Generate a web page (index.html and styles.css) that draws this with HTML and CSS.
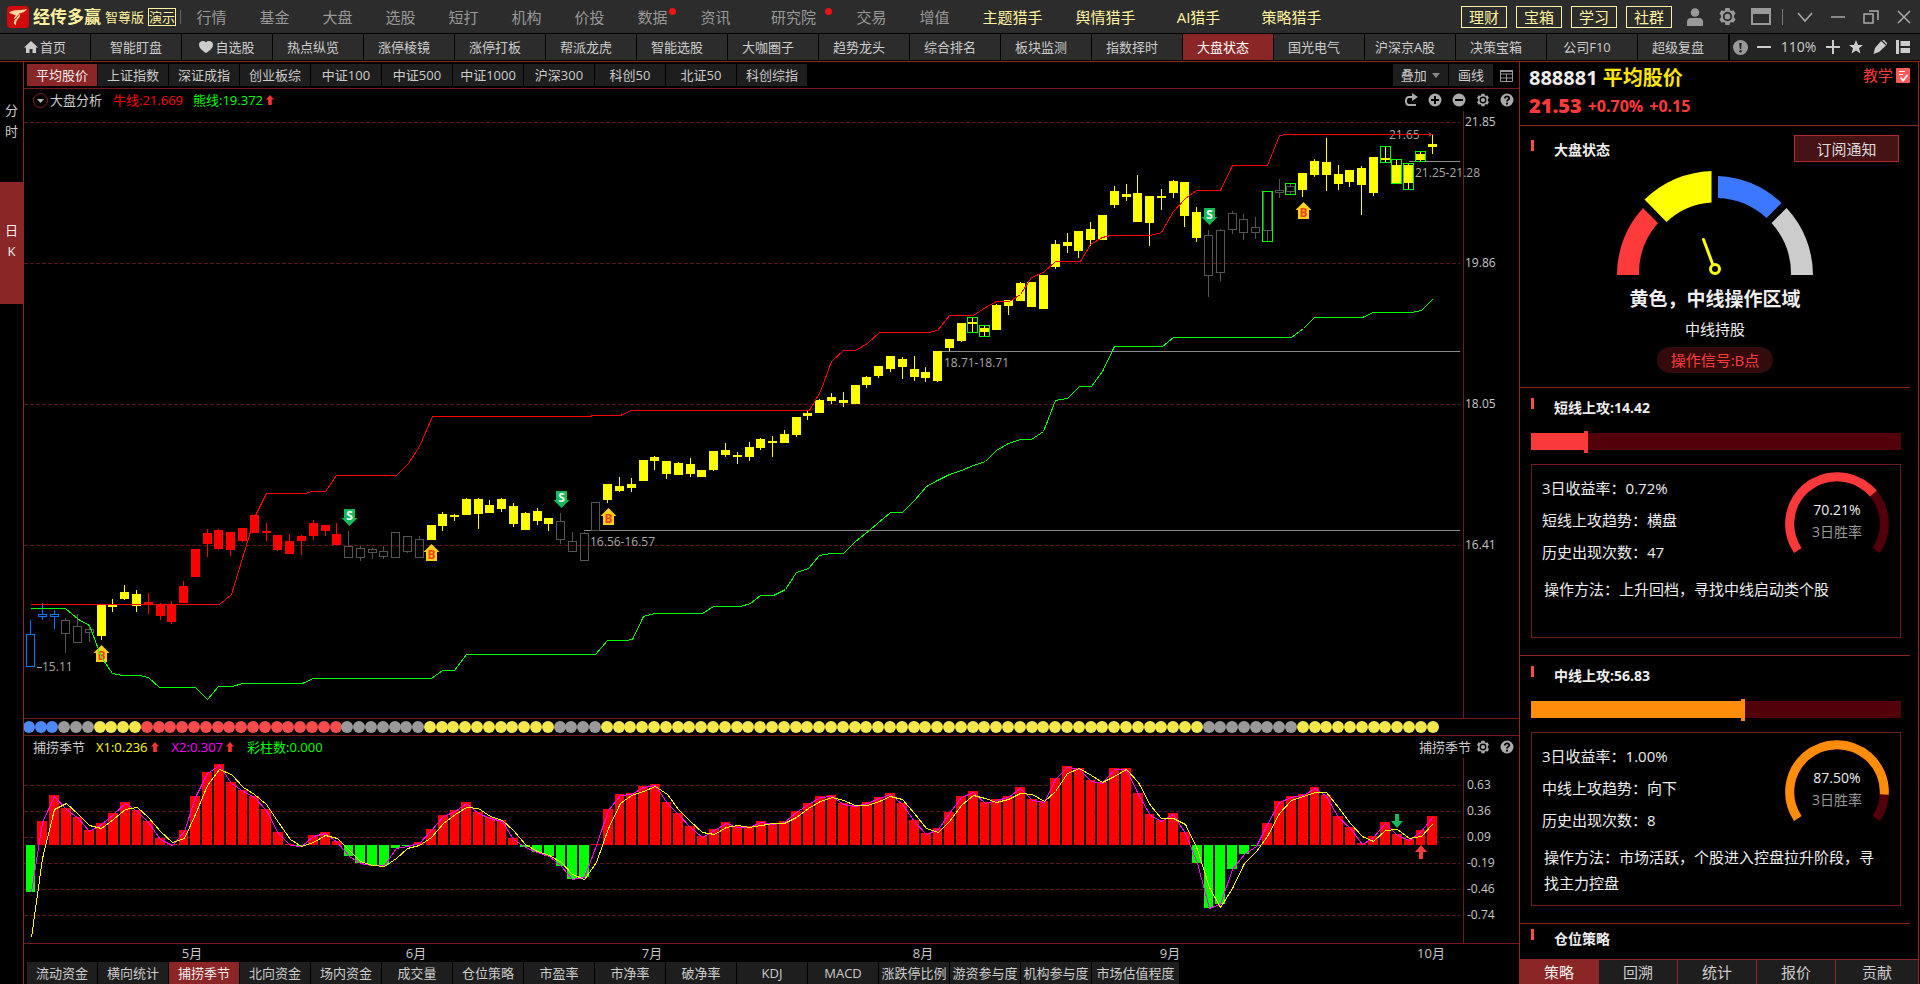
FILE: index.html
```html
<!DOCTYPE html>
<html lang="zh-CN">
<head>
<meta charset="utf-8">
<title>经传多赢 智尊版</title>
<link rel="stylesheet" href="styles.css">
</head>
<body>
<svg class="defs" width="0" height="0" aria-hidden="true">
  <symbol id="i-gear" viewBox="0 0 18 18"><path fill="currentColor" fill-rule="evenodd" d="M6.600 3 7 1h4l.4 2 1.300.7 2-.7 2 3.400-1.500 1.400v2.400l1.500 1.400-2 3.400-2-.7-1.300.7L11 17H7l-.4-2-1.300-.7-2 .7-2-3.400 1.500-1.400V7.800L1.300 6.400l2-3.400 2 .7zM9 4.600a4.400 4.400 0 1 0 0 8.800 4.400 4.400 0 0 0 0-8.800zM9 6.300a2.700 2.700 0 1 1 0 5.400 2.700 2.700 0 0 1 0-5.400z"/></symbol>
  <symbol id="i-help" viewBox="0 0 14 14"><circle cx="7" cy="7" r="6.500" fill="currentColor"/><path d="M4.800 5.500C4.800 2.600 9.400 2.800 9.200 5.400 9.100 6.900 7 6.800 7 8.600" fill="none" stroke="#000" stroke-width="1.800"/><circle cx="7" cy="10.700" r="1.100" fill="#000"/></symbol>
  <symbol id="i-up" viewBox="0 0 8 10"><path d="M4 0 8 4.500H5.800V10H2.200V4.500H0z" fill="#ff3232"/></symbol>
</svg>
<div class="app">
  <header class="top">
    <svg class="logo" viewBox="0 0 22 22" width="22" height="22"><rect width="22" height="22" rx="4" fill="#d20a0a"/><path d="M2 7C5 3 12 5 20 3c-2 3-5 4-8 4.500 2 1.500 1 3.500-1 5.500-2 2-2 4-2 6.500-3-2-2.500-4-.5-6.500-2 0-1.500-2 .5-3.500C7 9 5 7.500 2 7z" fill="#ffd9a0"/><path d="M8.500 13c1-2 2.500-3 3.500-4.500" fill="none" stroke="#d20a0a"/></svg>
    <strong class="brand">经传多赢</strong>
    <span class="edition">智尊版</span>
    <span class="demo">演示</span>
    <nav class="menu">
      <a href="#">行情</a><a href="#">基金</a><a href="#">大盘</a><a href="#">选股</a><a href="#">短打</a><a href="#">机构</a><a href="#">价投</a><a href="#" class="new">数据</a><a href="#">资讯</a><a href="#" class="wide new">研究院</a><a href="#">交易</a><a href="#">增值</a><a href="#" class="wide hot">主题猎手</a><a href="#" class="wide hot">舆情猎手</a><a href="#" class="wide hot">AI猎手</a><a href="#" class="wide hot">策略猎手</a>
    </nav>
    <div class="quick"><a href="#">理财</a><a href="#">宝箱</a><a href="#">学习</a><a href="#">社群</a></div>
    <div class="win">
      <button aria-label="用户"><svg viewBox="0 0 18 18" width="18" height="18"><circle cx="9" cy="4.500" r="4.300" fill="currentColor"/><path d="M1 18v-4q0-4 4-4h8q4 0 4 4v4z" fill="currentColor"/></svg></button>
      <button aria-label="设置"><svg width="19" height="19"><use href="#i-gear"/></svg></button>
      <button aria-label="窗口"><svg viewBox="0 0 20 17" width="20" height="17"><path d="M0 0h20v17H0zM2 6v9h16V6z" fill="currentColor" fill-rule="evenodd"/></svg></button>
    </div>
    <div class="win caps">
      <button aria-label="更多"><svg viewBox="0 0 16 16" width="16" height="16"><path d="m1 4 7 8 7-8" class="ln"/></svg></button>
      <button aria-label="最小化"><svg viewBox="0 0 16 16" width="16" height="16"><path d="M1 8h14" class="ln"/></svg></button>
      <button aria-label="还原"><svg viewBox="0 0 16 16" width="16" height="16"><path d="M1 5h9v9H1zM6 2h9v9" class="ln"/></svg></button>
      <button aria-label="关闭"><svg viewBox="0 0 16 16" width="16" height="16"><path d="m2 2 12 12M14 2 2 14" class="ln"/></svg></button>
    </div>
  </header>

  <div class="subbar">
    <nav class="sub">
      <a href="#" class="mid"><svg viewBox="0 0 14 12" width="14" height="12"><path d="M7 0 14 6.500H12V12H8.500V8h-3v4H2V6.500H0z" fill="currentColor"/></svg>首页</a>
      <a href="#" class="mid">智能盯盘</a>
      <a href="#" class="mid"><svg viewBox="0 0 14 12" width="14" height="12"><path d="M7 12C2 9 0 6.500 0 3.500 0 .5 4.500-1.500 7 1.500 9.500-1.500 14 .5 14 3.500 14 6.500 12 9 7 12z" fill="currentColor"/></svg>自选股</a>
      <a href="#">热点纵览</a><a href="#">涨停棱镜</a><a href="#">涨停打板</a><a href="#">帮派龙虎</a><a href="#">智能选股</a><a href="#">大咖圈子</a><a href="#">趋势龙头</a><a href="#">综合排名</a><a href="#">板块监测</a><a href="#">指数择时</a><a href="#" class="on">大盘状态</a><a href="#">国光电气</a><a href="#">沪深京A股</a><a href="#">决策宝箱</a><a href="#">公司F10</a><a href="#">超级复盘</a>
    </nav>
    <div class="zoombar">
      <button aria-label="提示"><svg viewBox="0 0 15 15" width="15" height="15"><circle cx="7.500" cy="7.500" r="7.500" fill="#999"/><path d="M6.300 3h2.400l-.5 6H6.800z" fill="#222"/><circle cx="7.500" cy="11.300" r="1.200" fill="#222"/></svg></button>
      <button aria-label="缩小"><svg viewBox="0 0 14 14" width="14" height="14"><path d="M0 7h14" stroke="currentColor" stroke-width="2"/></svg></button>
      <span>110%</span>
      <button aria-label="放大"><svg viewBox="0 0 14 14" width="14" height="14"><path d="M0 7h14M7 0v14" stroke="currentColor" stroke-width="2"/></svg></button>
      <button aria-label="收藏"><svg viewBox="0 0 14 14" width="14" height="14"><path d="m7 0 2 5h5l-4 3.300 1.500 5.200L7 10.400l-4.500 3.100L4 8.300 0 5h5z" fill="currentColor"/></svg></button>
      <button aria-label="画笔"><svg viewBox="0 0 14 14" width="14" height="14"><path d="m8 1 5 4.500L6 12l-5.500 2L2 8zM9 0h2l3 3v2z" fill="currentColor"/></svg></button>
      <button aria-label="布局"><svg viewBox="0 0 14 14" width="14" height="14"><path d="M0 0h3v14H0zM4.500 1H14v5H4.500zM4.500 8H14v5H4.500z" fill="currentColor"/></svg></button>
    </div>
  </div>

  <div class="body">
    <aside class="side">
      <button>分<br>时</button>
      <button class="on">日<br>K</button>
    </aside>

    <main class="main">
      <div class="tabs head">
        <button class="on">平均股价</button><button>上证指数</button><button>深证成指</button><button>创业板综</button><button>中证100</button><button>中证500</button><button>中证1000</button><button>沪深300</button><button>科创50</button><button>北证50</button><button>科创综指</button>
        <span class="grow"></span>
        <button class="over">叠加 <i class="caret"></i></button><button class="draw">画线</button>
        <button class="cells" aria-label="表格"><svg viewBox="0 0 13 13" width="13" height="13"><path d="M.5 1.500h12v11H.5zM.5 5h12M.5 9h12M6.500 5v7.500" fill="none" stroke="#999"/><path d="M0 1h13v2H0z" fill="#999"/></svg></button>
      </div>
      <div class="legend">
        <button class="drop" aria-label="指标菜单"><svg viewBox="0 0 15 15" width="15" height="15"><circle cx="7.500" cy="7.500" r="7" fill="none" stroke="#8c2020"/><path d="M4 6h7L7.500 10z" fill="#bbb"/></svg></button>
        <span class="name">大盘分析</span>
        <span class="bull">牛线:21.669</span>
        <span class="bear">熊线:19.372<svg width="8" height="10"><use href="#i-up"/></svg></span>
        <span class="grow"></span>
        <div class="tools">
          <button aria-label="重做"><svg viewBox="0 0 14 14" width="14" height="14"><path d="M9 4H5Q2 4 2 8t3 4h7" fill="none" stroke="currentColor" stroke-width="2"/><path d="m8 0 6 4-6 4z" fill="currentColor"/></svg></button>
          <button aria-label="放大"><svg viewBox="0 0 14 14" width="14" height="14"><circle cx="7" cy="7" r="6.500" fill="currentColor"/><path d="M3 7h8M7 3v8" stroke="#000" stroke-width="2"/></svg></button>
          <button aria-label="缩小"><svg viewBox="0 0 14 14" width="14" height="14"><circle cx="7" cy="7" r="6.500" fill="currentColor"/><path d="M3 7h8" stroke="#000" stroke-width="2"/></svg></button>
          <button aria-label="设置"><svg width="14" height="14"><use href="#i-gear"/></svg></button>
          <button aria-label="帮助"><svg width="14" height="14"><use href="#i-help"/></svg></button>
        </div>
      </div>
      <svg class="price" id="price" role="img" aria-label="K线图"></svg>
      <svg class="strip" id="strip" role="img" aria-label="状态"></svg>
      <div class="legend second">
        <span class="name">捕捞季节</span>
        <span class="x1">X1:0.236<svg width="8" height="10"><use href="#i-up"/></svg></span>
        <span class="x2">X2:0.307<svg width="8" height="10"><use href="#i-up"/></svg></span>
        <span class="bear">彩柱数:0.000</span>
        <span class="grow"></span>
        <span class="name">捕捞季节</span>
        <div class="tools">
          <button aria-label="设置"><svg width="14" height="14"><use href="#i-gear"/></svg></button>
          <button aria-label="帮助"><svg width="14" height="14"><use href="#i-help"/></svg></button>
        </div>
      </div>
      <svg class="season" id="season" role="img" aria-label="捕捞季节"></svg>
      <div class="tabs foot">
        <button>流动资金</button><button>横向统计</button><button class="on">捕捞季节</button><button>北向资金</button><button>场内资金</button><button>成交量</button><button>仓位策略</button><button>市盈率</button><button>市净率</button><button>破净率</button><button>KDJ</button><button>MACD</button><button>涨跌停比例</button><button>游资参与度</button><button>机构参与度</button><button class="long">市场估值程度</button>
      </div>
    </main>

    <aside class="panel">
      <div class="quote">
        <h1>888881 <em>平均股价</em></h1>
        <a href="#" class="teach">教学<svg viewBox="0 0 14 15" width="14" height="15"><rect width="14" height="15" rx="1" fill="#ff5a5a"/><path d="M3 3.500h6M3 6.500h4" stroke="#fff"/><path d="m4.500 9.500 2.500 3L11.500 7" fill="none" stroke="#fff" stroke-width="1.800"/></svg></a>
        <p class="last"><b>21.53</b><span>+0.70%</span><span>+0.15</span></p>
      </div>
      <div class="scroll">
        <section class="state">
          <h2>大盘状态</h2>
          <button class="notify">订阅通知</button>
          <svg class="gauge" viewBox="0 0 200 106" width="200" height="106">
            <path d="M2 105A98 98 0 0 1 28 38L43 53A76 76 0 0 0 24 105z" fill="#ff3a3a"/>
            <path d="M29.500 29.500A103 103 0 0 1 96.500 1V32.500A72 72 0 0 0 51.500 52z" fill="#ffff00"/>
            <path d="M103 6A98 98 0 0 1 166.500 33L151.500 48A76 76 0 0 0 103 28z" fill="#3c78ff"/>
            <path d="M171.500 38A98 98 0 0 1 198 105H176A76 76 0 0 0 156.500 53z" fill="#ccc"/>
            <path d="M88.500 69.500 98 95" stroke="#ffff00" stroke-width="3" stroke-linecap="round"/>
            <circle cx="100" cy="99" r="4.500" fill="#000" stroke="#ffff00" stroke-width="3"/>
          </svg>
          <p class="zone">黄色，中线操作区域</p>
          <p class="advice">中线持股</p>
          <span class="pill">操作信号:B点</span>
        </section>
        <section class="attack">
          <h2>短线上攻:14.42</h2>
          <div class="meter"><i style="width:15.400%"></i></div>
          <div class="card">
            <div class="facts">
              <ul><li>3日收益率：0.72%</li><li>短线上攻趋势：横盘</li><li>历史出现次数：47</li></ul>
              <svg class="ring" viewBox="0 0 104 84" width="104" height="84"><path class="track" d="M12.800 78.400A47.300 47.300 0 1 1 91.200 78.400"/><path class="val" pathLength="100" stroke-dasharray="70.200 100" d="M12.800 78.400A47.300 47.300 0 1 1 91.200 78.400"/><text x="52" y="43">70.21%</text><text x="52" y="65" class="dim">3日胜率</text></svg>
            </div>
            <p>操作方法：上升回档，寻找中线启动类个股</p>
          </div>
        </section>
        <section class="attack orange">
          <h2>中线上攻:56.83</h2>
          <div class="meter"><i style="width:57.800%"></i></div>
          <div class="card">
            <div class="facts">
              <ul><li>3日收益率：1.00%</li><li>中线上攻趋势：向下</li><li>历史出现次数：8</li></ul>
              <svg class="ring" viewBox="0 0 104 84" width="104" height="84"><path class="track" d="M12.800 78.400A47.300 47.300 0 1 1 91.200 78.400"/><path class="val" pathLength="100" stroke-dasharray="87.500 100" d="M12.800 78.400A47.300 47.300 0 1 1 91.200 78.400"/><text x="52" y="43">87.50%</text><text x="52" y="65" class="dim">3日胜率</text></svg>
            </div>
            <p>操作方法：市场活跃，个股进入控盘拉升阶段，寻找主力控盘</p>
          </div>
        </section>
        <section class="position"><h2>仓位策略</h2></section>
      </div>
      <nav class="ptabs"><button class="on">策略</button><button>回溯</button><button>统计</button><button>报价</button><button>贡献</button></nav>
    </aside>
  </div>
</div>
<script src="charts.js"></script>
</body>
</html>
```

FILE: styles.css
```css
* { box-sizing: border-box; }
body { margin: 0; background: #000; color: #ccc; font: 13px/20px "Open Sans", "Noto Sans CJK SC", sans-serif; }
button { margin: 0; padding: 0; border: 0; background: none; color: inherit; font: inherit; cursor: pointer; white-space: nowrap; }
a { color: inherit; text-decoration: none; white-space: nowrap; }
h1, h2, p, ul { margin: 0; padding: 0; list-style: none; }
svg { flex: none; }
.defs { position: absolute; }
.grow { flex: 1; }
.app { display: flex; flex-direction: column; height: 100vh; overflow: hidden; }

.top { display: flex; align-items: center; flex: none; height: 33px; padding-left: 7px; background: #2c2c2c; color: #999; }
.brand { margin-left: 4px; color: #fff3a0; font-size: 17px; white-space: nowrap; }
.edition { margin-left: 4px; color: #fff3a0; white-space: nowrap; }
.demo { margin-left: 4px; border: 1px solid #fff3a0; color: #fff3a0; line-height: 16px; white-space: nowrap; }
.menu { display: flex; flex: 1; align-items: center; margin-left: 4px; font-size: 15px; position: relative; }
.menu::before { content: ""; position: absolute; left: 0; width: 1px; height: 14px; background: #666; }
.menu a { position: relative; width: 63px; text-align: center; }
.menu .wide { width: 93px; }
.menu .hot { color: #fff3a0; }
.menu .new::after { content: ""; position: absolute; top: 1px; right: 8px; width: 7px; height: 7px; border-radius: 50%; background: #f01414; }
.quick { display: flex; gap: 9px; margin-right: 6px; color: #fff3a0; font-size: 15px; }
.quick a { width: 46px; border: 1px solid #fff3a0; text-align: center; }
.win { display: flex; }
.win button { display: flex; justify-content: center; align-items: center; width: 33px; height: 24px; }
.caps { position: relative; margin-left: 11px; }
.caps::before { content: ""; position: absolute; left: -6px; top: 4px; width: 1px; height: 16px; background: #777; }
.ln { fill: none; stroke: #aaa; stroke-width: 1.500; }

.subbar { display: flex; flex: none; height: 29px; padding: 1px 0; border-bottom: 1px solid #8a2626; }
.sub { display: grid; grid-template-columns: repeat(19, minmax(0, 1fr)); flex: 1; gap: 1px; }
.sub a { display: flex; justify-content: center; align-items: center; gap: 2px; padding-right: 10px; background: #2c2c2c; }
.sub .mid { padding-right: 0; }
.sub .on { background: #8a2626; color: #fff; }
.zoombar { display: flex; align-items: center; justify-content: space-between; flex: none; width: 190px; margin-left: 2px; padding: 0 10px 0 3px; background: #242424; font-size: 14px; }
.zoombar button { display: flex; }

.body { display: flex; flex: 1; min-height: 0; }
.side { flex: none; width: 24px; border-right: 1px solid #8a2626; padding-top: 38px; }
.side button { display: block; width: 23px; height: 82px; line-height: 21px; padding-bottom: 42px; }
.side .on { height: 122px; padding: 0 0 4px; background: #8a2626; color: #eee; }
.main { display: flex; flex-direction: column; flex: 1; min-width: 0; }

.tabs { display: flex; flex: none; gap: 1px; padding-left: 3px; }
.tabs button { width: 70px; height: 22px; background: #1e1e1e; line-height: 22px; }
.tabs .on { background: #8a2626; color: #eee; }
.tabs .long { width: 87px; }
.tabs .over { width: 55px; }
.tabs .draw { width: 44px; }
.tabs .cells { display: flex; justify-content: center; align-items: center; width: 24px; background: none; }
.head { height: 27px; padding: 2px 1px 2px 3px; border-bottom: 1px solid #701c1c; }
.caret { display: inline-block; margin-left: 2px; border: 4px solid transparent; border-top: 5px solid #888; border-bottom: 0; vertical-align: 2px; }

.legend { display: flex; align-items: center; flex: none; height: 22px; padding: 0 0 0 9px; white-space: nowrap; }
.drop { display: flex; }
.name { margin-left: 2px; }
.bull { margin-left: 11px; color: #f00; }
.bear { margin-left: 10px; color: #0f0; }
.legend span svg { margin-left: 3px; }
.second .x1 { margin-left: 11px; color: #ff0; }
.second .x2 { margin-left: 13px; color: #f0f; }
.second .bear { margin-left: 13px; }
.second { padding-left: 7px; }
.tools { display: flex; color: #aaa; }
.tools button { display: flex; justify-content: center; align-items: center; width: 24px; }

.price, .strip, .season { display: block; width: 100%; min-height: 0; overflow: hidden; }
.price { flex: 607 1 0; }
.season { flex: 204 1 0; }
.strip { flex: none; height: 18px; border: solid #701c1c; border-width: 1px 0; }
.price text, .season text { fill: #c8c8c8; font-size: 12px; }
.price .note { fill: #a8a8a8; }
.price .mark { font-size: 12px; font-weight: 700; text-anchor: middle; }
.price .buy { fill: #ff3c1e; }
.price .sell { fill: #fff; }
.season .month { font-size: 13px; text-anchor: middle; }

.panel { display: flex; flex-direction: column; flex: none; width: 400px; margin-right: 1px; border: solid #8a2626; border-width: 0 1px; color: #eee; }
.quote { display: grid; grid-template-columns: 1fr auto; align-content: start; flex: none; height: 64px; padding: 0 8px 0 9px; border-bottom: 1px solid #8a2626; }
.quote h1 { font-size: 20px; line-height: 32px; }
.quote em { color: #ffe600; font-style: normal; }
.teach { display: flex; align-items: center; gap: 3px; height: 26px; color: #ff3a3a; font-size: 15px; }
.last { display: flex; align-items: center; gap: 6px; color: #ff3a3a; font-size: 16px; line-height: 24px; font-weight: 700; }
.last b { font-size: 20px; }
.scroll { flex: 1; min-height: 0; overflow: hidden; }
.scroll section { position: relative; margin-right: 8px; padding: 10px 9px 17px 11px; border-bottom: 1px solid #8a2626; }
.scroll h2 { display: flex; gap: 20px; font-size: 14px; line-height: 20px; }
.scroll h2::before { content: ""; width: 3px; height: 11px; background: #ff4a4a; }
.scroll .state { display: flex; flex-direction: column; align-items: center; padding: 14px 0; }
.state h2 { align-self: flex-start; margin-left: 11px; }
.notify { position: absolute; top: 9px; right: 11px; width: 105px; height: 27px; border: 1px solid #b02a2e; background: #461214; color: #ddd; font-size: 15px; }
.gauge { margin-top: 10px; }
.zone { margin-top: 8px; font-size: 19px; line-height: 30px; font-weight: 700; }
.advice { font-size: 15px; line-height: 30px; }
.pill { margin-top: 3px; height: 26px; padding: 0 14px; border-radius: 13px; background: #330b0c; color: #ff3a3a; font-size: 15px; line-height: 26px; }
.scroll .position { padding-top: 5px; border: 0; }
.meter { height: 17px; margin-top: 15px; background: #520009; }
.meter i { display: block; position: relative; height: 17px; background: #fa3a3a; }
.meter i::after { content: ""; position: absolute; right: 0; top: -2px; width: 4px; height: 22px; background: inherit; }
.card { min-height: 174px; margin-top: 14px; padding: 7px 11px 7px 10px; border: 1px solid #701c1c; font-size: 15px; }
.facts { display: flex; justify-content: space-between; }
.facts li { line-height: 32px; }
.card p { margin-top: 8px; padding: 0 10px 0 2px; line-height: 26px; }
.ring path { fill: none; stroke-width: 9px; }
.ring .track { stroke: #520009; }
.ring .val { stroke: #fa3a3a; }
.ring text { fill: #eee; font-size: 14px; text-anchor: middle; }
.ring .dim { fill: #999; }
.orange .meter i { background: #ff8c0a; }
.orange .ring .val { stroke: #ff8c0a; }
.ptabs { display: flex; flex: none; border-top: 1px solid #8a2626; }
.ptabs button { flex: 79 1 0; height: 24px; border-left: 1px solid #8a2626; background: #1e1e1e; color: #ccc; font-size: 15px; }
.ptabs button:first-child { border-left: 0; }
.ptabs button:last-child { flex-grow: 83; }
.ptabs .on { background: #8a2626; color: #eee; }
```

FILE: charts.js
```js
// Plot space: 1495 units wide; the price pane starts at 111, the season pane at 758.
const W = 1495, X0 = 24, N = 120;
const cx = i => 30.5 + 11.78 * i;

// high, body top, body bottom, low
const candles = [
[620,634,667,667],[603,614,617,620],[610,614,617,629],[618,620,634,653],[614,626,643,643],[625,629,633,642],
[605,605,636,640],[599,605,607,612],[585,592,599,600],[590,594,606,612],[593,602,605,614],[603,605,616,620],
[601,605,622,624],[581,586,603,603],[549,549,577,577],[529,533,544,557],[529,530,549,550],[532,532,550,556],
[528,528,541,542],[515,515,533,533],[523,531,533,541],[535,535,550,551],[534,541,554,554],[535,536,541,555],
[520,523,536,540],[525,525,531,536],[523,534,545,545],[531,546,558,558],[546,548,558,561],[548,549,553,559],
[546,551,557,559],[532,532,558,558],[536,536,552,553],[536,539,558,558],[525,525,540,540],[512,514,526,531],
[514,515,517,521],[498,499,515,515],[498,499,514,529],[500,505,513,513],[498,499,509,512],[503,506,524,527],
[512,513,530,530],[508,511,521,525],[518,518,524,531],[513,521,540,544],[532,541,552,552],[532,533,561,561],
[502,502,531,531],[484,484,500,503],[477,486,491,492],[478,484,488,492],[460,460,481,481],[456,457,461,470],
[461,461,474,479],[462,463,475,475],[458,464,474,477],[470,470,477,477],[451,451,470,471],[443,450,455,457],
[452,455,457,464],[442,447,457,461],[438,439,448,450],[436,441,443,457],[430,434,443,443],[417,417,435,437],
[411,413,416,420],[399,400,413,413],[393,397,401,404],[392,400,403,407],[385,385,404,404],[376,377,385,388],
[366,366,376,378],[356,356,369,372],[357,359,367,379],[356,369,377,381],[367,372,378,382],[351,351,381,382],
[339,339,348,351],[323,323,341,342],[317,322,324,332],[326,328,332,337],[304,305,330,330],[300,300,306,315],
[282,283,301,301],[282,282,307,307],[275,275,309,309],[240,244,267,269],[233,242,246,253],[231,231,251,258],
[222,229,240,246],[215,215,240,240],[186,191,205,208],[184,194,197,201],[175,193,222,222],[196,196,223,246],
[189,196,198,210],[180,181,193,198],[182,182,216,227],[207,212,238,242],[230,235,276,297],[229,230,273,281],
[211,213,230,234],[214,219,233,240],[217,227,233,239],[191,191,231,242],[179,190,193,198],[183,186,192,195],
[173,173,190,197],[159,161,175,177],[138,162,175,191],[165,174,184,190],[170,170,182,187],[166,168,185,215],
[157,157,193,196],[146,158,160,162],[159,165,183,183],[163,165,183,189],[152,154,160,161],[134,144,147,154]];

const phases = [[3,'b'],[6,'g'],[10,'y'],[27,'r'],[34,'g'],[45,'y'],[49,'g'],[100,'y'],[108,'g'],[120,'y']];
const phase = i => phases.find(p => i < p[0])[1];
const candleFill = { b: '#0a78ff', g: '#555', y: '#ffff00', r: '#ff0000' };
const dotFill = { b: '#4d88f5', g: '#999', y: '#f5e84c', r: '#f84b4b' };

const bull = [[30,604],[219,604],[231,594],[248,538],[255,515],[266,493],[305,493],[311,491],[325,491],[336,475],[396,475],[408,463],[419,446],[432,416],[590,416],[592,415],[620,415],[631,410],[809,410],[820,391],[831,361],[843,350],[855,350],[867,343],[879,332],[928,332],[937,330],[949,315],[973,315],[985,307],[996,301],[1009,301],[1020,294],[1031,277],[1043,272],[1055,261],[1080,261],[1090,244],[1102,237],[1110,235],[1150,235],[1161,232],[1173,211],[1185,198],[1196,190],[1220,190],[1232,165],[1267,165],[1279,135],[1286,134],[1432,134]];
const bear = [[30,608],[65,608],[78,619],[89,625],[101,657],[112,673],[122,675],[139,675],[148,677],[159,687],[195,687],[207,699],[218,686],[232,686],[242,683],[302,683],[313,678],[431,678],[442,670],[454,670],[466,654],[595,654],[607,640],[625,640],[632,639],[643,616],[654,613],[702,613],[713,606],[740,606],[750,603],[760,595],[773,595],[785,589],[796,572],[808,568],[819,555],[830,553],[843,553],[855,541],[870,529],[890,512],[902,512],[914,500],[926,486],[937,480],[949,474],[961,470],[973,465],[985,461],[996,450],[1008,443],[1020,439],[1031,439],[1043,431],[1055,400],[1067,398],[1079,386],[1091,386],[1102,371],[1114,346],[1162,346],[1173,337],[1291,337],[1303,328],[1314,317],[1362,317],[1373,312],[1411,312],[1421,310],[1432,299]];
const bars = [892,821,795,808,817,830,823,813,802,810,821,838,844,830,796,772,764,782,790,796,809,832,844,846,835,832,841,856,863,865,865,848,846,842,829,815,810,802,812,817,820,838,847,852,856,866,879,877,844,809,794,793,786,784,802,813,826,836,829,822,826,826,821,823,821,811,803,796,795,803,805,802,797,793,803,820,833,828,812,796,791,802,799,796,787,799,801,778,766,768,780,782,768,768,793,814,820,813,832,863,908,904,869,854,846,823,801,796,794,787,795,816,827,843,836,822,834,839,830,816];
const boxes = [[80,317,333],[81,325,337],[105,191,242],[107,183,195],[115,146,163],[116,159,184],[117,163,190],[118,151,162]];
const signals = [['B',6,645],['S',27,509],['B',34,544],['S',45,491],['B',49,508],['S',100,208],['B',108,202]];

function pane(id, top, height) {
  const el = document.getElementById(id), r = el.getBoundingClientRect();
  const sx = r.width / W, sy = r.height / height;
  const X = x => Math.round((x - X0) * sx), Y = y => Math.round((y - top) * sy);
  const out = [];
  return {
    X, Y,
    add: s => out.push(s),
    rect: (x, y, w, h, fill, stroke) => out.push(stroke
      ? `<rect x="${x + .5}" y="${y + .5}" width="${w - 1}" height="${Math.max(h - 1, 1)}" fill="${fill}" stroke="${stroke}"/>`
      : `<rect x="${x}" y="${y}" width="${w}" height="${h}" fill="${fill}"/>`),
    line: (pts, color) => out.push(`<polyline points="${pts.map(p => (X(p[0]) + .5) + ',' + (Y(p[1]) + .5)).join(' ')}" fill="none" stroke="${color}" shape-rendering="crispEdges"/>`),
    dash: y => out.push(`<path d="M0 ${Y(y) + .5}H${X(1460)}" stroke="#5a1818" stroke-dasharray="4 2"/>`),
    text: (x, y, s, c = '') => out.push(`<text x="${X(x)}" y="${Y(y) + 4}" class="${c}">${s}</text>`),
    done: () => { el.innerHTML = out.join(''); }
  };
}

function drawPrice() {
  const p = pane('price', 111, 607), { X, Y } = p;
  [[122,'21.85'],[263,'19.86'],[404,'18.05'],[545,'16.41']].forEach(([y, s]) => { p.dash(y); p.text(1465, y, s); });
  p.rect(X(1463), 0, 1, Y(718), '#701c1c');
  [[583,530],[941,351],[1408,161]].forEach(([x, y]) => p.line([[x, y], [1459, y]], '#8a8a8a'));
  candles.forEach(([h, t, b, l], i) => {
    const k = phase(i), c = candleFill[k], x = X(cx(i) - .5), hollow = k === 'g' || k === 'b';
    if (h < t) p.rect(x, Y(h), 1, Y(t) - Y(h), c);
    if (l > b) p.rect(x, Y(b), 1, Y(l) - Y(b), c);
    p.rect(x - 4, Y(t), 9, Y(b) - Y(t), hollow ? 'none' : c, hollow ? c : '');
  });
  boxes.forEach(([i, t, b]) => p.rect(X(cx(i) - .5) - 5, Y(t), 11, Y(b) - Y(t), 'none', '#00ff00'));
  p.text(1389, 135, '21.65', 'note');
  p.add(`<path d="M${X(1427)} ${Y(134) + .5}h4m-2-2 2 2-2 2" fill="none" stroke="#aaa"/>`);
  p.line(bull, '#ff0000');
  signals.forEach(([s, i, y]) => {
    const x = X(cx(i)) + .5, t = Y(y);
    p.add(s === 'B'
      ? `<path d="M${x} ${t}l8 8h-2.500v9h-11v-9h-2.500z" fill="#ffd21a"/><text class="mark buy" x="${x}" y="${t + 15}">B</text>`
      : `<path d="M${x - 5.5} ${t}h11v9h2.500l-8 8-8-8h2.500z" fill="#12bb55"/><text class="mark sell" x="${x}" y="${t + 11}">S</text>`);
  });
  p.line(bear, '#00ff00');
  p.line([[36, 667], [41, 667]], '#aaa');
  p.text(42, 667, '15.11', 'note');
  p.text(590, 542, '16.56-16.57', 'note');
  p.text(944, 363, '18.71-18.71', 'note');
  p.text(1415, 173, '21.25-21.28', 'note');
  p.done();
}

function drawStrip() {
  const p = pane('strip', 719, 18);
  for (let i = 0; i < N; i++) p.add(`<circle cx="${p.X(28.8 + 11.797 * i)}" cy="8" r="6" fill="${dotFill[phase(i)]}"/>`);
  p.done();
}

function drawSeason() {
  const p = pane('season', 758, 204), { X, Y } = p;
  [[785,'0.63'],[811,'0.36'],[837,'0.09'],[863,'-0.19'],[889,'-0.46'],[915,'-0.74']].forEach(([y, s]) => { p.dash(y); p.text(1467, y, s); });
  p.rect(X(1463), 0, 1, Y(943), '#701c1c');
  p.rect(0, Y(943), X(1519), 1, '#701c1c');
  bars.forEach((v, i) => {
    const up = v < 845, a = Y(Math.min(v, 845)), b = Y(Math.max(v, 845));
    p.rect(X(cx(i)) - 5, a, X(cx(i + 1)) - X(cx(i)) - 2, b - a, up ? '#ff0000' : '#00ff00');
  });
  p.line(bars.map((v, i) => [cx(i), v + (v > 845 ? 0 : 1)]), '#ff00ff');
  p.line(bars.map((v, i) => [cx(i), i ? (v + bars[i - 1]) / 2 + 1 : 937]), '#ffff00');
  p.add(`<path d="M${X(cx(116)) - 2} ${Y(814)}h4v7h4l-6 7-6-7h4z" fill="#12bb55"/>`);
  p.add(`<path d="M${X(cx(118))} ${Y(845)}l6 7h-4v7h-4v-7h-4z" fill="#ff3c3c"/>`);
  [[192,'5月'],[416,'6月'],[652,'7月'],[923,'8月'],[1170,'9月'],[1431,'10月']].forEach(([x, s]) => p.text(x, 954, s, 'month'));
  p.done();
}

function draw() { drawPrice(); drawStrip(); drawSeason(); }
draw();
window.addEventListener('resize', draw);
```
